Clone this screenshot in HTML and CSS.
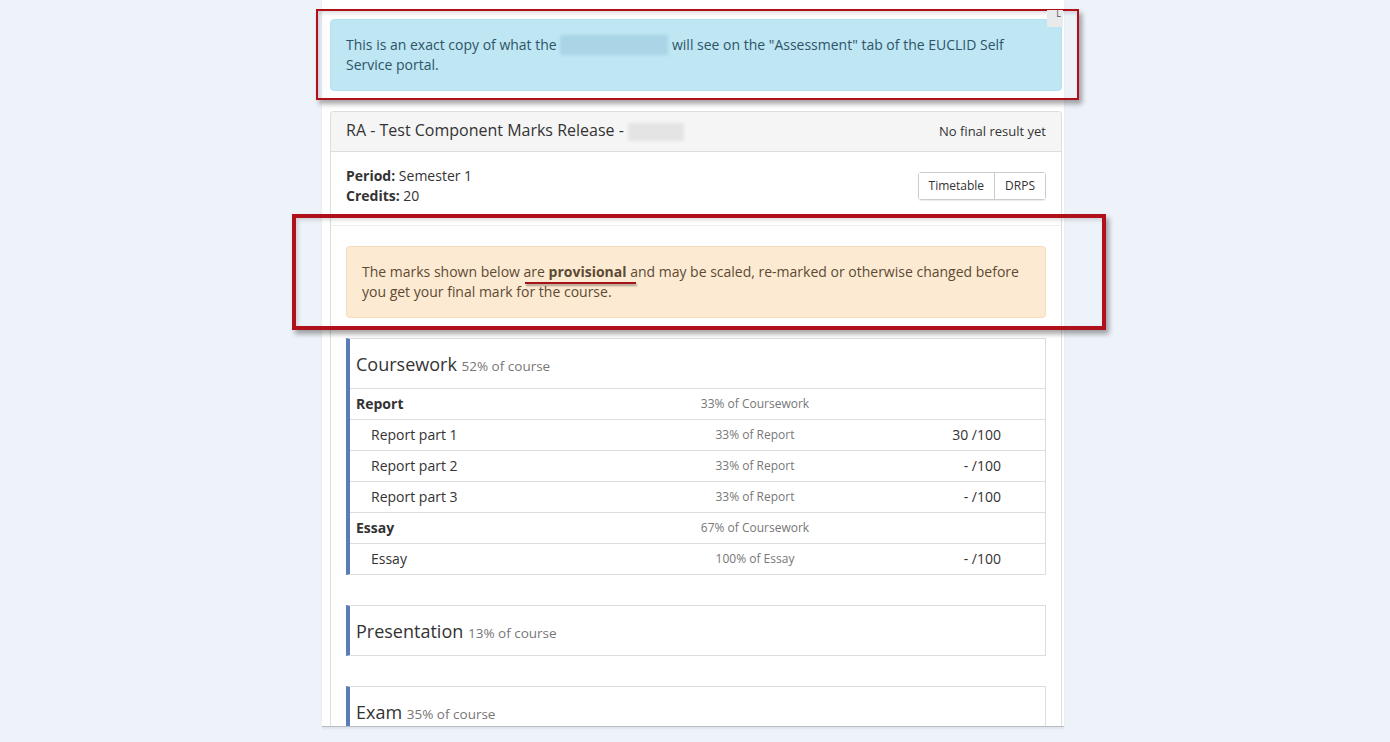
FILE: index.html
```html
<!DOCTYPE html>
<html>
<head>
<meta charset="utf-8">
<link rel="stylesheet" href="styles.css">
</head>
<body>
<div class="page">
  <div class="alert alert-info">This is an exact copy of what the <span class="blur blur-info"></span> will see on the "Assessment" tab of the EUCLID Self Service portal.</div>

  <div class="panel">
    <div class="panel-heading">
      <h3 class="panel-title">RA - Test Component Marks Release - <span class="blur blur-title"></span></h3>
      <span class="result">No final result yet</span>
    </div>
    <div class="panel-body summary">
      <div class="facts">
        <div><b>Period:</b> Semester 1</div>
        <div><b>Credits:</b> 20</div>
      </div>
      <div class="btn-group">
        <span class="btn">Timetable</span><span class="btn">DRPS</span>
      </div>
    </div>
    <div class="panel-body marks">
      <div class="alert alert-warning">The marks shown below are <b class="prov">provisional</b> and may be scaled, re-marked or otherwise changed before you get your final mark for the course.</div>

      <div class="comp">
        <div class="comp-head">Coursework <small>52% of course</small></div>
        <div class="row group"><span class="name">Report</span><span class="weight">33% of Coursework</span><span class="mark"></span></div>
        <div class="row item"><span class="name">Report part 1</span><span class="weight">33% of Report</span><span class="mark">30 /100</span></div>
        <div class="row item"><span class="name">Report part 2</span><span class="weight">33% of Report</span><span class="mark">- /100</span></div>
        <div class="row item"><span class="name">Report part 3</span><span class="weight">33% of Report</span><span class="mark">- /100</span></div>
        <div class="row group"><span class="name">Essay</span><span class="weight">67% of Coursework</span><span class="mark"></span></div>
        <div class="row item"><span class="name">Essay</span><span class="weight">100% of Essay</span><span class="mark">- /100</span></div>
      </div>

      <div class="comp">
        <div class="comp-head">Presentation <small>13% of course</small></div>
      </div>

      <div class="comp">
        <div class="comp-head">Exam <small>35% of course</small></div>
      </div>
    </div>
  </div>
</div>

<div class="annot annot-top"></div>
<div class="corner-tab">L</div>
<div class="annot annot-warn"></div>
</body>
</html>
```

FILE: styles.css
```css
html, body {
  margin: 0;
  padding: 0;
}
body {
  background: #eef2f9;
  font-family: "Open Sans", "Liberation Sans", sans-serif;
  font-size: 14px;
  line-height: 20px;
  color: #333;
  height: 742px;
  overflow: hidden;
  position: relative;
}
.page {
  width: 732px;
  margin-left: 322px;
  padding-left: 8px;
  padding-right: 2px;
  height: 726px;
  overflow: hidden;
  background: #fff;
  border-bottom: 1px solid #b9bcc2;
  box-shadow: 0 2px 2px rgba(0,0,0,0.06);
}
.alert {
  padding: 15px;
  border: 1px solid transparent;
  border-radius: 4px;
}
.alert-info {
  margin-top: 19px;
  margin-bottom: 20px;
  background: #bee6f3;
  border-color: #b5e1f0;
  color: #2f5467;
}
.alert-warning {
  margin-bottom: 20px;
  background: #fdead2;
  border-color: #f5dcb8;
  color: #5c4a35;
}
.blur {
  display: inline-block;
  vertical-align: middle;
  border-radius: 3px;
  filter: blur(1.5px);
}
.blur-info {
  width: 108px;
  height: 20px;
  background: #a9d5e6;
  margin-top: -3px;
}
.blur-title {
  width: 56px;
  height: 18px;
  background: #e4e4e4;
}
.prov {
  position: relative;
  font-weight: 700;
}
.prov::after {
  content: "";
  position: absolute;
  left: -24px;
  right: -9px;
  bottom: -3px;
  height: 2px;
  background: #a3141a;
  box-shadow: 1px 2px 2px rgba(0,0,0,0.35);
}
.panel {
  border: 1px solid #ddd;
  border-radius: 4px;
  border-bottom: none;
  border-bottom-left-radius: 0;
  border-bottom-right-radius: 0;
}
.panel-heading {
  display: flex;
  justify-content: space-between;
  align-items: center;
  padding: 9px 15px 10px;
  background: #f5f5f5;
  border-bottom: 1px solid #ddd;
  border-top-left-radius: 3px;
  border-top-right-radius: 3px;
}
.panel-title {
  margin: 0;
  font-size: 16px;
  font-weight: 400;
  line-height: 18px;
  color: #333;
}
.result {
  font-size: 13px;
  line-height: 18px;
  color: #333;
}
.panel-body {
  padding: 15px;
}
.summary {
  display: flex;
  justify-content: space-between;
  align-items: center;
  border-bottom: 1px solid #eee;
  padding-top: 14px;
  padding-bottom: 19px;
}
.facts b {
  font-weight: 700;
}
.btn-group {
  display: flex;
  border: 1px solid #ccc;
  border-radius: 3px;
  box-shadow: 0 1px 1px rgba(0,0,0,0.08);
}
.btn {
  font-size: 12px;
  line-height: 18px;
  padding: 4px 10px;
  color: #333;
  background: #fff;
}
.btn + .btn {
  border-left: 1px solid #ccc;
}
.marks {
  padding-top: 20px;
}
.comp {
  border: 1px solid #ddd;
  border-left: 4px solid #5a7cb9;
  margin-bottom: 30px;
}
.comp-head {
  font-size: 18px;
  line-height: 25px;
  height: 25px;
  padding: 13px 6px 11px;
  color: #333;
}
.comp-head small {
  font-size: 13.5px;
  line-height: 1;
  color: #777;
}
.row {
  display: grid;
  grid-template-columns: 1fr 168px 162px;
  padding-right: 44px;
  border-top: 1px solid #ddd;
  height: 30px;
  align-items: center;
}
.row .name {
  padding-left: 6px;
}
.row.item .name {
  padding-left: 21px;
}
.row.group .name {
  font-weight: 700;
}
.weight {
  text-align: center;
  font-size: 12px;
  color: #777;
}
.mark {
  text-align: right;
  font-size: 14px;
}
.annot {
  position: absolute;
  box-sizing: border-box;
  border-style: solid;
  border-color: #b0101a;
  box-shadow: 3px 4px 5px rgba(0,0,0,0.35), inset 2px 2px 4px rgba(0,0,0,0.15);
}
.annot-top {
  left: 316px;
  top: 9px;
  width: 763px;
  height: 91px;
  border-width: 2px;
}
.annot-warn {
  left: 292px;
  top: 214px;
  width: 814px;
  height: 116px;
  border-width: 4px;
}
.corner-tab {
  position: absolute;
  left: 1047px;
  top: 10px;
  width: 16px;
  height: 17px;
  background: #e9eaec;
  font-size: 9px;
  line-height: 8px;
  color: #555;
  text-align: right;
  box-sizing: border-box;
  padding-right: 2px;
}
```
